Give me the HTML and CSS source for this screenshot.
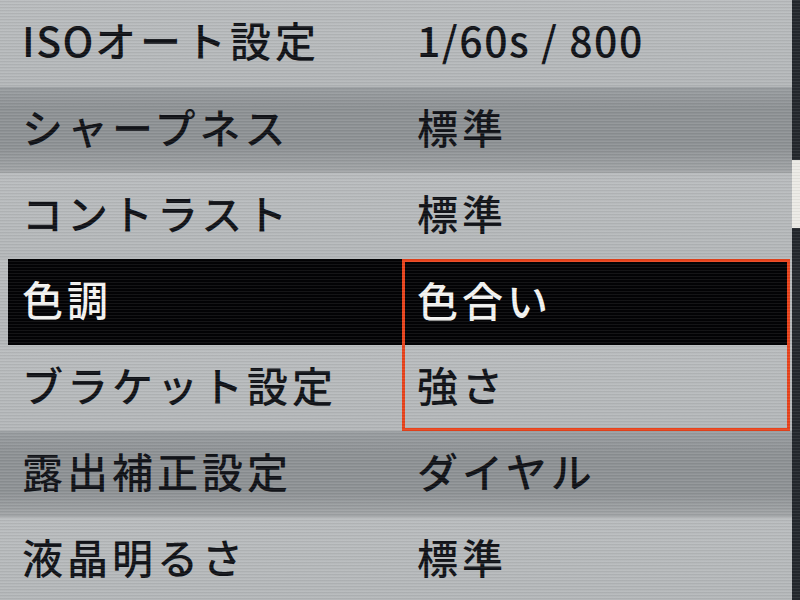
FILE: index.html
```html
<!DOCTYPE html>
<html lang="ja">

<head>
    <meta charset="UTF-8">
    <meta name="viewport" content="width=device-width, initial-scale=1.0">
    <title>撮影メニュー</title>
    <link rel="stylesheet" href="styles.css">
</head>

<body>
    <div class="screen">
        <ul class="menu">
            <li class="row first">
                <span class="label"><span class="latin">ISO</span>オート設定</span>
                <span class="value latin">1/60s / 800</span>
            </li>
            <li class="row dim">
                <span class="label">シャープネス</span>
                <span class="value">標準</span>
            </li>
            <li class="row">
                <span class="label">コントラスト</span>
                <span class="value">標準</span>
            </li>
            <li class="row selected">
                <span class="label">色調</span>
                <span class="value pick-top">色合い</span>
            </li>
            <li class="row">
                <span class="label">ブラケット設定</span>
                <span class="value pick-bottom">強さ</span>
            </li>
            <li class="row dim">
                <span class="label">露出補正設定</span>
                <span class="value">ダイヤル</span>
            </li>
            <li class="row">
                <span class="label">液晶明るさ</span>
                <span class="value">標準</span>
            </li>
        </ul>
        <div class="scrollbar">
            <div class="thumb"></div>
        </div>
    </div>
</body>

</html>
```

FILE: styles.css
```css
body {
    margin: 0;
    background: #000;
    font-family: "Noto Sans CJK JP", "Liberation Sans", sans-serif;
}

.screen {
    position: relative;
    display: flex;
    width: 800px;
    height: 600px;
    overflow: hidden;
    background: #b6b9bb;
}

/* faint LCD scan lines over the whole panel */
.screen::after {
    content: "";
    position: absolute;
    inset: 0;
    pointer-events: none;
    background: repeating-linear-gradient(to bottom,
            rgba(255, 255, 255, 0.07) 0 1px,
            rgba(0, 0, 0, 0.05) 1px 2px,
            transparent 2px 3px);
}

.menu {
    list-style: none;
    margin: 0;
    padding: 0;
    width: 792px;
}

.row {
    display: grid;
    grid-template-columns: 8px 394px 388px;
    height: 86px;
    font-size: 41px;
    font-weight: 500;
    line-height: 1;
    letter-spacing: 4px;
    color: #111318;
    background: linear-gradient(to bottom, #b9bcbe, #b4b7b9);
}

.row.first {
    height: 87px;
}

.row.dim {
    background: linear-gradient(to bottom, #9a9ea1 0%, #8e9295 25%, #8e9295 70%, #a3a6a8 100%);
}

.latin {
    letter-spacing: 1.5px;
}

.label,
.value {
    display: flex;
    align-items: center;
    box-sizing: border-box;
    padding-bottom: 8px;
    white-space: nowrap;
}

.label {
    grid-column: 2;
    padding-left: 14px;
}

.value {
    grid-column: 3;
    padding-left: 15px;
}

.row.selected .label,
.row.selected .value {
    background: #030305;
    color: #f4f4f2;
}

/* open picker spanning the selected row and the one below */
.value.pick-top,
.value.pick-bottom {
    padding-left: 12px;
    border: 3px solid #e8431c;
}

.value.pick-top {
    border-bottom: none;
}

.value.pick-bottom {
    border-top: none;
    padding-bottom: 5px;
}

.scrollbar {
    width: 8px;
    background: #24282d;
}

.thumb {
    margin-top: 160px;
    height: 68px;
    background: #ecebe6;
}
```
